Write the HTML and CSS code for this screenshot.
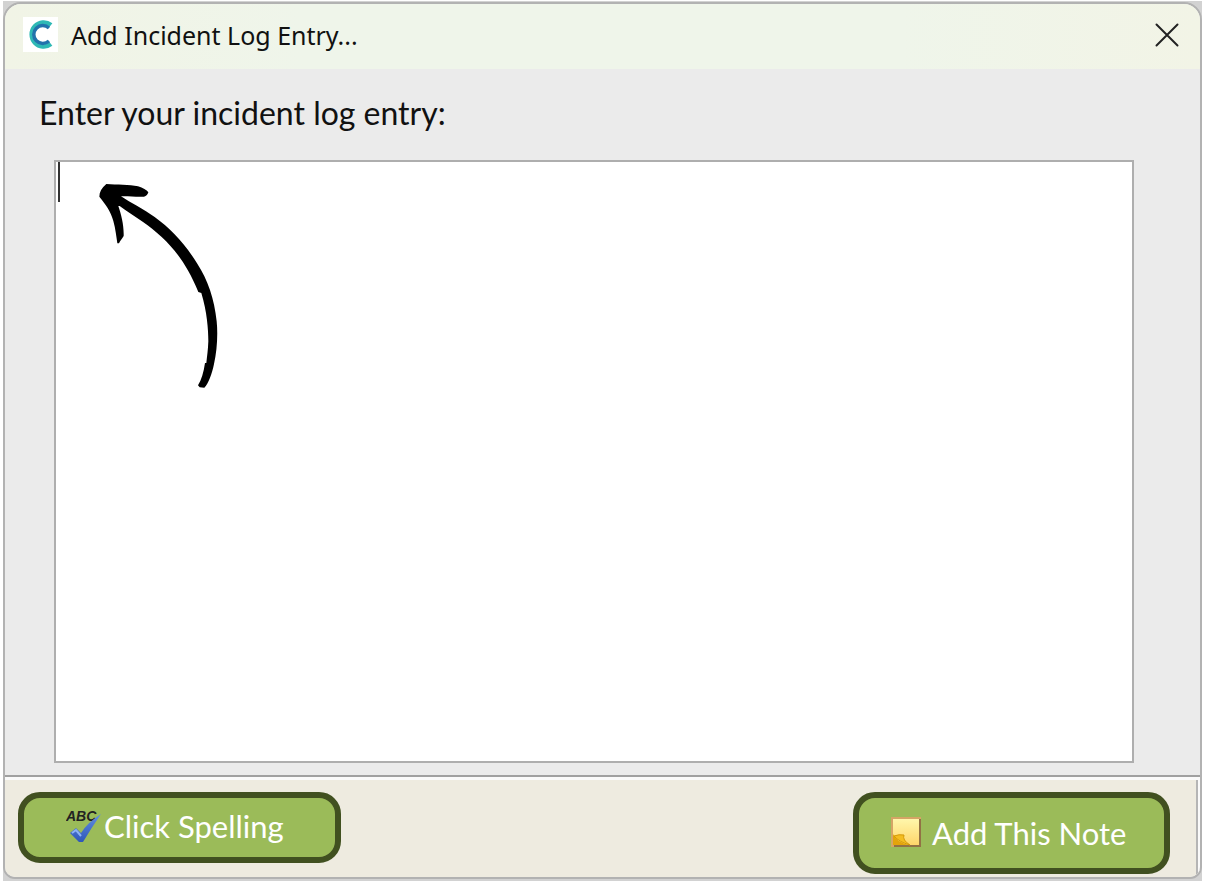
FILE: index.html
```html
<!DOCTYPE html>
<html lang="en">
<head>
    <meta charset="UTF-8">
    <meta name="viewport" content="width=device-width, initial-scale=1.0">
    <title>Add Incident Log Entry...</title>
    <link rel="stylesheet" href="styles.css">
</head>
<body>

    <div class="desktop">
        <form class="window">
            <header class="titlebar">
                <svg class="app-icon" viewBox="0 0 35 35" aria-hidden="true">
                    <rect width="35" height="35" fill="#fff"/>
                    <path d="M28 8A12 12 0 1 0 28 27" fill="none" stroke="#2fb9b5" stroke-width="4.500"/>
                    <path d="M26 11A9 9 0 1 0 26 24" fill="none" stroke="#2272ac" stroke-width="3.500"/>
                </svg>
                <h1>Add Incident Log Entry...</h1>
                <button type="button" class="close-btn" aria-label="Close">
                    <svg viewBox="0 0 24 24"><path d="M1.500 1.500l21 21M22.500 1.500l-21 21"/></svg>
                </button>
            </header>

            <main class="content">
                <label for="entry">Enter your incident log entry:</label>
                <div class="editor">
                    <textarea id="entry"></textarea>
                    <span class="caret"></span>
                    <svg class="arrow" viewBox="170 96 366 624" aria-hidden="true">
                        <path d="M198 102 C184 114 177 126 177 140 C197 165 211 183 219 213 C226 238 228 261 231 280 L236 280 C240 271 246 265 250 258 C251 226 243 195 234 168 L238 168 C259 184 286 201 307 215 C374 262 430 318 474 426 L483 429 C500 485 504 538 504 574 C503 600 500 620 498 639 L494 639 C490 667 483 690 473 706 L478 712 L492 713 C504 702 515 671 521 642 C530 603 533 553 529 514 C522 448 503 390 470 340 C434 281 391 236 343 201 C309 177 272 159 242 139 C266 138 291 142 311 140 C318 139 323 132 324 127 C319 119 308 114 293 109 C267 104 230 104 198 102Z"/>
                    </svg>
                </div>
            </main>

            <footer class="actions">
                <button type="button" class="btn spelling-btn">
                    <svg class="spell-icon" viewBox="0 0 36 36" aria-hidden="true">
                        <defs>
                            <linearGradient id="tick" x1="0" y1="0" x2="0" y2="1">
                                <stop offset="0" stop-color="#628fe0"/>
                                <stop offset="1" stop-color="#2f57b8"/>
                            </linearGradient>
                        </defs>
                        <text x="0" y="13">ABC</text>
                        <path d="M4 25L10 20L15 25Q22 14 35 6Q26 19 17 34H13Z" fill="url(#tick)"/>
                        <path d="M6 25l4-3 5 6" fill="none" stroke="#8db2f5" stroke-width="2"/>
                    </svg>
                    <span>Click Spelling</span>
                </button>
                <button type="submit" class="btn note-btn">
                    <svg class="note-icon" viewBox="0 0 31 31" aria-hidden="true">
                        <defs>
                            <linearGradient id="paper" x1="0" y1="0" x2="0" y2="1">
                                <stop offset="0" stop-color="#fff8ae"/>
                                <stop offset="1" stop-color="#ffd468"/>
                            </linearGradient>
                        </defs>
                        <path d="M1 1H29V29H1Z" fill="url(#paper)" stroke="#d5a566" stroke-width="2"/>
                        <path d="M29 2V29H3" fill="none" stroke="#927144" stroke-width="2"/>
                        <path d="M2 17Q6 26 19 28H2Z" fill="#e3a40b"/>
                        <path d="M3 19Q8 17 13 18Q11 23 19 28Q8 25 3 19Z" fill="#f4bd20" stroke="#d49908"/>
                    </svg>
                    <span>Add This Note</span>
                </button>
            </footer>
        </form>
    </div>

</body>
</html>
```

FILE: styles.css
```css
* {
    margin: 0;
    padding: 0;
    box-sizing: border-box;
}

body {
    height: 100vh;
    padding: 1px 4px 3px 3px;
    background-color: #fff;
    font-family: Lato, "Open Sans", sans-serif;
    color: #111;
}

.desktop {
    height: 100%;
    padding: 1px 0 2px;
    background-color: #d2d2d2;
}

.window {
    display: flex;
    flex-direction: column;
    height: 100%;
    overflow: hidden;
    border: 2px solid #b2b2b2;
    border-radius: 18px 18px 12px 12px;
    background-color: #ebebeb;
}

/* Title bar */
.titlebar {
    display: flex;
    align-items: center;
    height: 65px;
    padding: 0 19px 4px 18px;
    background: linear-gradient(90deg, #f1f4e6, #eff5ea 25%, #eff5ea 75%, #f2f4e6);
}

.app-icon {
    width: 35px;
    height: 35px;
    margin-right: 13px;
}

.titlebar h1 {
    flex: 1;
    font-family: "Noto Sans", sans-serif;
    font-size: 25px;
    font-weight: 400;
}

.close-btn {
    width: 28px;
    height: 28px;
    padding: 2px;
    border: none;
    background: none;
    cursor: pointer;
}

.close-btn svg {
    display: block;
    width: 24px;
    height: 24px;
    fill: none;
    stroke: #222;
    stroke-width: 2;
    stroke-linecap: round;
}

/* Entry area */
.content {
    display: flex;
    flex: 1;
    flex-direction: column;
    padding: 24px 66px 12px 49px;
}

.content label {
    height: 40px;
    margin-left: -15px;
    margin-bottom: 27px;
    font-size: 32px;
    line-height: 40px;
}

.editor {
    position: relative;
    flex: 1;
}

.editor textarea {
    display: block;
    width: 100%;
    height: 100%;
    padding: 4px 8px;
    border: 2px solid #aeaeae;
    outline: none;
    background-color: #fff;
    font: inherit;
    font-size: 31px;
    resize: none;
}

.caret {
    position: absolute;
    top: 2px;
    left: 4px;
    width: 2px;
    height: 40px;
    background-color: #333;
}

.arrow {
    position: absolute;
    top: 22px;
    left: 43px;
    width: 122px;
    height: 208px;
    pointer-events: none;
}

/* Bottom bar */
.actions {
    display: flex;
    align-items: flex-start;
    justify-content: space-between;
    height: 102px;
    padding: 15px 30px 0 13px;
    border-top: 2px solid #a0a0a0;
    background-color: #eeebe0;
    box-shadow: inset 0 3px #fafafa, inset -2px 0 #fafafa, inset -4px 0 #b5b5b5;
}

.btn {
    display: flex;
    align-items: center;
    border: 6px solid #415020;
    border-radius: 22px;
    background-color: #9bbb59;
    color: #fff;
    font-family: inherit;
    font-size: 31px;
    cursor: pointer;
}

.spelling-btn {
    width: 323px;
    height: 71px;
    padding: 0 0 3px 42px;
    gap: 2px;
}

.note-btn {
    width: 317px;
    height: 82px;
    padding: 0 0 1px 32px;
    gap: 10px;
}

.spell-icon {
    width: 36px;
    height: 36px;
}

.spell-icon text {
    font: italic bold 14px "Liberation Sans", sans-serif;
    fill: #222;
}

.note-icon {
    width: 31px;
    height: 31px;
}
```
